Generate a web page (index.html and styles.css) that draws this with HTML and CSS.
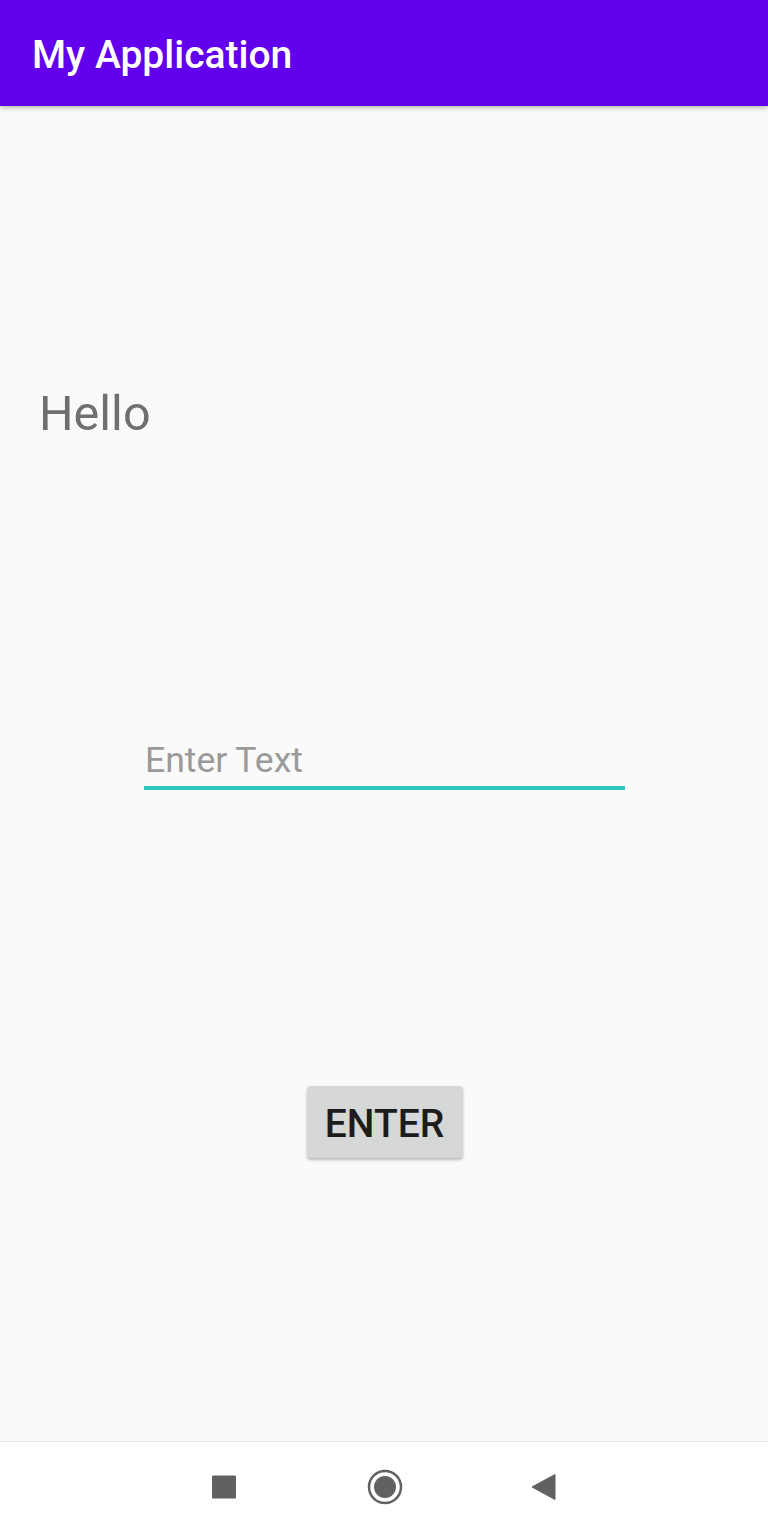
FILE: index.html
```html
<!DOCTYPE html>
<html>
<head>
<meta charset="utf-8">
<link rel="stylesheet" href="styles.css">
</head>
<body>
<div class="screen">
  <header class="appbar"><span class="title">My Application</span></header>
  <main class="content">
    <div class="hello">Hello</div>
    <div class="field"><span class="placeholder">Enter Text</span></div>
    <div class="btn-row"><button class="btn">ENTER</button></div>
  </main>
  <nav class="navbar">
    <svg class="nav-icon" width="26" height="26" viewBox="0 0 26 26"><rect x="1" y="1.5" width="24" height="23" rx="1" fill="#616161"/></svg>
    <svg class="nav-icon" width="36" height="36" viewBox="0 0 36 36"><circle cx="18" cy="18" r="16" fill="none" stroke="#616161" stroke-width="2.5"/><circle cx="18" cy="18" r="11" fill="#616161"/></svg>
    <svg class="nav-icon" width="26" height="28" viewBox="0 0 26 28"><path d="M1 14 L24 1.5 L24 26.5 Z" fill="#616161" stroke="#616161" stroke-width="1" stroke-linejoin="round"/></svg>
  </nav>
</div>
</body>
</html>
```
FILE: styles.css
```css
html, body {
  margin: 0;
  padding: 0;
}
body {
  font-family: Roboto, "Liberation Sans", sans-serif;
  background: #fafafa;
}
.screen {
  width: 768px;
  height: 1533px;
  display: flex;
  flex-direction: column;
  overflow: hidden;
}
.appbar {
  height: 106px;
  flex: none;
  background: #6200ee;
  display: flex;
  align-items: center;
  padding-left: 32px;
  box-shadow: 0 2px 5px rgba(0,0,0,0.25);
  position: relative;
  z-index: 1;
}
.title {
  color: #ffffff;
  font-size: 39px;
  font-weight: 500;
  letter-spacing: 0;
  padding-top: 3px;
}
.content {
  flex: 1;
  display: flex;
  flex-direction: column;
  background: #fafafa;
}
.hello {
  margin-top: 280px;
  margin-left: 39px;
  font-size: 48.5px;
  line-height: 56px;
  color: #6f6f6f;
}
.field {
  margin-top: 296px;
  margin-left: 144px;
  width: 480px;
  border-bottom: 4px solid #2dc8bd;
  padding-left: 1px;
  height: 48px;
  display: flex;
  align-items: flex-end;
}
.placeholder {
  font-size: 35.5px;
  line-height: 42px;
  color: #9a9a9a;
  padding-bottom: 5px;
}
.btn-row {
  margin-top: 296px;
  display: flex;
  justify-content: center;
}
.btn {
  width: 156px;
  height: 72px;
  background: #d6d7d7;
  border: none;
  border-radius: 4px;
  box-shadow: 0 2px 3px rgba(0,0,0,0.25);
  font-family: Roboto, "Liberation Sans", sans-serif;
  font-size: 39px;
  font-weight: 500;
  color: #1c1c1c;
  padding: 4px 0 0 0;
  margin-left: 1px;
}
.navbar {
  height: 89px;
  flex: none;
  background: #ffffff;
  border-top: 1px solid #e4e4e4;
  display: flex;
  align-items: center;
  justify-content: center;
  gap: 0;
  padding-bottom: 2px;
}
.nav-icon:nth-child(1) { margin-right: 130px; }
.nav-icon:nth-child(3) { margin-left: 128px; }
```
